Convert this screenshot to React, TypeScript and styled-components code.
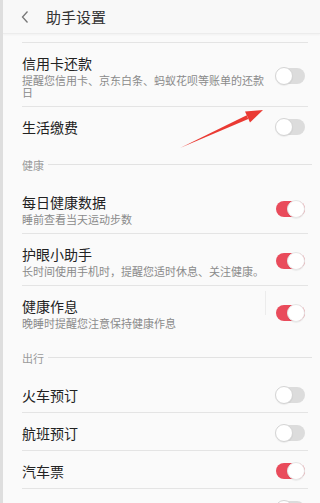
import React from 'react';
import styled, { createGlobalStyle } from 'styled-components';

const GlobalStyle = createGlobalStyle`
  html, body {
    margin: 0;
    padding: 0;
    overflow: hidden;
    background: #fafafa;
  }
  * {
    box-sizing: border-box;
  }
`;

const Page = styled.div`
  position: relative;
  width: 320px;
  height: 503px;
  overflow: hidden;
  background: #fafafa;
  border-left: 3px solid #dedede;
  font-family: "Noto Sans CJK SC", "Noto Sans", sans-serif;
`;

const Header = styled.div`
  height: 34px;
  display: flex;
  align-items: center;
  padding-left: 17px;
  background: #f8f8f8;
  border-bottom: 1px solid #ececec;
  box-shadow: 0 1px 2px rgba(0, 0, 0, 0.04);
`;

const BackButton = styled.div`
  width: 26px;
  height: 20px;
  display: flex;
  align-items: center;
`;

const Title = styled.div`
  font-size: 15px;
  line-height: 20px;
  color: #333;
  margin-left: 0;
`;

const List = styled.div`
  padding-top: 8px;
`;

const TopLine = styled.div`
  height: 1px;
  margin: 0 12px 0 19px;
  background: #e4e4e4;
`;

const Row = styled.div<{ $last?: boolean }>`
  display: flex;
  align-items: center;
  gap: 8px;
  margin: 0 12px 0 19px;
  padding: 11px 3px 8px 0;
  border-bottom: 1px solid ${p => (p.$last ? 'transparent' : '#e4e4e4')};
`;

const TextCol = styled.div`
  flex: 1;
  min-width: 0;
`;

const ItemTitle = styled.div`
  font-size: 14px;
  line-height: 18px;
  color: #222;
`;

const ItemSub = styled.div`
  margin-top: 2px;
  font-size: 11px;
  line-height: 12px;
  color: #8a8a8a;
`;

const SwitchWrap = styled.div<{ $divider?: boolean }>`
  position: relative;
  flex: none;
  &::before {
    content: '';
    display: ${p => (p.$divider ? 'block' : 'none')};
    position: absolute;
    left: -10px;
    top: -13px;
    width: 1px;
    height: 24px;
    background: #ececec;
  }
`;

const Track = styled.div<{ $on: boolean }>`
  position: relative;
  width: 30px;
  height: 18px;
  display: flex;
  align-items: center;
  &::before {
    content: '';
    position: absolute;
    left: 1px;
    right: 0;
    top: 1px;
    bottom: 1px;
    border-radius: 8px;
    background: ${p => (p.$on ? '#e94b5b' : '#dcdcdc')};
  }
`;

const Knob = styled.div<{ $on: boolean }>`
  position: absolute;
  top: 0;
  left: ${p => (p.$on ? '12px' : '0')};
  width: 18px;
  height: 18px;
  border-radius: 50%;
  background: #fff;
  border: 1px solid ${p => (p.$on ? '#e6e6e6' : '#d4d4d4')};
  box-shadow: 0 1px 1px rgba(0, 0, 0, 0.06);
`;

const Section = styled.div`
  height: 37px;
  display: flex;
  align-items: center;
  padding: 2px 8px 0 19px;
`;

const SectionLabel = styled.span`
  font-size: 11px;
  line-height: 14px;
  color: #9a9a9a;
`;

const SectionLine = styled.div`
  flex: 1;
  height: 1px;
  margin-left: 4px;
  background: #e2e2e2;
`;

const Overlay = styled.svg`
  position: absolute;
  left: -3px;
  top: 0;
  pointer-events: none;
`;

type Item = {
  title: string;
  sub?: string;
  on: boolean;
  divider?: boolean;
};

const Switch = ({ on, divider }: { on: boolean; divider?: boolean }) => (
  <SwitchWrap $divider={divider}>
    <Track $on={on}>
      <Knob $on={on} />
    </Track>
  </SwitchWrap>
);

const Group = ({ items }: { items: Item[] }) => (
  <>
    {items.map((it, i) => (
      <Row key={it.title} $last={i === items.length - 1}>
        <TextCol>
          <ItemTitle>{it.title}</ItemTitle>
          {it.sub && <ItemSub>{it.sub}</ItemSub>}
        </TextCol>
        <Switch on={it.on} divider={it.divider} />
      </Row>
    ))}
  </>
);

const SectionHead = ({ label }: { label: string }) => (
  <Section>
    <SectionLabel>{label}</SectionLabel>
    <SectionLine />
  </Section>
);

const reminders: Item[] = [
  { title: '信用卡还款', sub: '提醒您信用卡、京东白条、蚂蚁花呗等账单的还款日', on: false },
  { title: '生活缴费', on: false },
];

const health: Item[] = [
  { title: '每日健康数据', sub: '睡前查看当天运动步数', on: true },
  { title: '护眼小助手', sub: '长时间使用手机时，提醒您适时休息、关注健康。', on: true },
  { title: '健康作息', sub: '晚睡时提醒您注意保持健康作息', on: true, divider: true },
];

const travel: Item[] = [
  { title: '火车预订', on: false },
  { title: '航班预订', on: false },
  { title: '汽车票', on: true },
  { title: '收藏的航班', on: false },
];

export default function App() {
  return (
    <Page>
      <GlobalStyle />
      <Header>
        <BackButton>
          <svg width="10" height="14" viewBox="0 0 10 14">
            <polyline points="7.5,1.5 2.5,7 7.5,12.5" fill="none" stroke="#777" strokeWidth="1.3" />
          </svg>
        </BackButton>
        <Title>助手设置</Title>
      </Header>
      <List>
        <TopLine />
        <Group items={reminders} />
        <SectionHead label="健康" />
        <Group items={health} />
        <SectionHead label="出行" />
        <Group items={travel} />
      </List>
      <Overlay width="320" height="503" viewBox="0 0 320 503">
        <polygon points="180,148 248.3,118.9 246.7,115.3" fill="#ea3a33" />
        <polygon points="263,110 250,122.6 245,111.6" fill="#ea3a33" />
      </Overlay>
    </Page>
  );
}
